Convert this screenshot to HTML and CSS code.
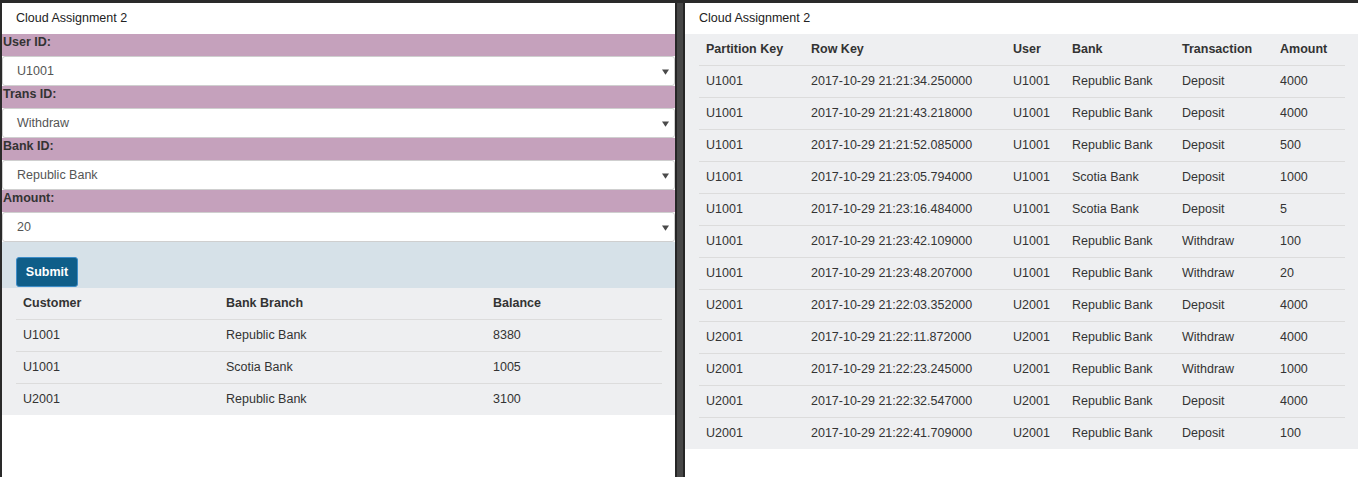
FILE: index.html
```html
<!DOCTYPE html>
<html>
<head>
<meta charset="utf-8">
<title>Cloud Assignment 2</title>
<link rel="stylesheet" href="styles.css">
</head>
<body>
<div class="screen">
  <div class="win">
    <div class="title">Cloud Assignment 2</div>
    <form class="form">
      <div class="field">
        <div class="label">User ID:</div>
        <div class="select"><span>U1001</span><svg class="caret" width="8" height="6" viewBox="0 0 8 6"><polygon points="0,0 8,0 4,6" fill="#4a4a4a"/></svg></div>
      </div>
      <div class="field">
        <div class="label">Trans ID:</div>
        <div class="select"><span>Withdraw</span><svg class="caret" width="8" height="6" viewBox="0 0 8 6"><polygon points="0,0 8,0 4,6" fill="#4a4a4a"/></svg></div>
      </div>
      <div class="field">
        <div class="label">Bank ID:</div>
        <div class="select"><span>Republic Bank</span><svg class="caret" width="8" height="6" viewBox="0 0 8 6"><polygon points="0,0 8,0 4,6" fill="#4a4a4a"/></svg></div>
      </div>
      <div class="field">
        <div class="label">Amount:</div>
        <div class="select"><span>20</span><svg class="caret" width="8" height="6" viewBox="0 0 8 6"><polygon points="0,0 8,0 4,6" fill="#4a4a4a"/></svg></div>
      </div>
      <div class="actions"><button type="button" class="btn">Submit</button></div>
    </form>
    <div class="panel">
      <table class="grid">
        <colgroup><col class="l1"><col class="l2"><col class="l3"></colgroup>
        <thead><tr><th>Customer</th><th>Bank Branch</th><th>Balance</th></tr></thead>
        <tbody>
          <tr><td>U1001</td><td>Republic Bank</td><td>8380</td></tr>
          <tr><td>U1001</td><td>Scotia Bank</td><td>1005</td></tr>
          <tr><td>U2001</td><td>Republic Bank</td><td>3100</td></tr>
        </tbody>
      </table>
    </div>
  </div>
  <div class="divider"></div>
  <div class="win">
    <div class="title">Cloud Assignment 2</div>
    <div class="panel panel-right">
      <table class="grid">
        <colgroup><col class="r1"><col class="r2"><col class="r3"><col class="r4"><col class="r5"><col class="r6"></colgroup>
        <thead><tr><th>Partition Key</th><th>Row Key</th><th>User</th><th>Bank</th><th>Transaction</th><th>Amount</th></tr></thead>
        <tbody>
          <tr><td>U1001</td><td>2017-10-29 21:21:34.250000</td><td>U1001</td><td>Republic Bank</td><td>Deposit</td><td>4000</td></tr>
          <tr><td>U1001</td><td>2017-10-29 21:21:43.218000</td><td>U1001</td><td>Republic Bank</td><td>Deposit</td><td>4000</td></tr>
          <tr><td>U1001</td><td>2017-10-29 21:21:52.085000</td><td>U1001</td><td>Republic Bank</td><td>Deposit</td><td>500</td></tr>
          <tr><td>U1001</td><td>2017-10-29 21:23:05.794000</td><td>U1001</td><td>Scotia Bank</td><td>Deposit</td><td>1000</td></tr>
          <tr><td>U1001</td><td>2017-10-29 21:23:16.484000</td><td>U1001</td><td>Scotia Bank</td><td>Deposit</td><td>5</td></tr>
          <tr><td>U1001</td><td>2017-10-29 21:23:42.109000</td><td>U1001</td><td>Republic Bank</td><td>Withdraw</td><td>100</td></tr>
          <tr><td>U1001</td><td>2017-10-29 21:23:48.207000</td><td>U1001</td><td>Republic Bank</td><td>Withdraw</td><td>20</td></tr>
          <tr><td>U2001</td><td>2017-10-29 21:22:03.352000</td><td>U2001</td><td>Republic Bank</td><td>Deposit</td><td>4000</td></tr>
          <tr><td>U2001</td><td>2017-10-29 21:22:11.872000</td><td>U2001</td><td>Republic Bank</td><td>Withdraw</td><td>4000</td></tr>
          <tr><td>U2001</td><td>2017-10-29 21:22:23.245000</td><td>U2001</td><td>Republic Bank</td><td>Withdraw</td><td>1000</td></tr>
          <tr><td>U2001</td><td>2017-10-29 21:22:32.547000</td><td>U2001</td><td>Republic Bank</td><td>Deposit</td><td>4000</td></tr>
          <tr><td>U2001</td><td>2017-10-29 21:22:41.709000</td><td>U2001</td><td>Republic Bank</td><td>Deposit</td><td>100</td></tr>
        </tbody>
      </table>
    </div>
  </div>
</div>
</body>
</html>
```
FILE: styles.css
```css
* { box-sizing: border-box; }
html, body { margin: 0; padding: 0; }
body {
  background: #2a2a2a;
  font-family: "Liberation Sans", Arial, sans-serif;
  font-size: 12.5px;
  color: #333;
  height: 477px;
  overflow: hidden;
}
.screen {
  display: flex;
  height: 477px;
  padding: 3px 0 0 2px;
}
.win {
  width: 673px;
  background: #fff;
  display: flex;
  flex-direction: column;
}
.divider {
  width: 10px;
  background: #474747;
  border-left: 2px solid #262626;
  border-right: 2px solid #262626;
}
.title {
  height: 31px;
  line-height: 30px;
  padding-left: 14px;
  color: #222;
}
.form { margin: 0; }
.field { display: flex; flex-direction: column; }
.label {
  height: 22px;
  line-height: 17px;
  background: #c5a1bc;
  font-weight: bold;
  color: #333;
  padding-left: 1px;
}
.select {
  height: 30px;
  background: #fff;
  border: 1px solid #cfcfcf;
  border-radius: 3px;
  display: flex;
  align-items: center;
  justify-content: space-between;
  padding: 0 5px 0 14px;
  color: #555;
}
.caret { display: block; margin-top: 1px; width: 7px; height: 6px; }
.actions {
  background: #d6e1e8;
  padding: 15px 14px 1px;
  height: 46px;
}
.btn {
  display: block;
  width: 62px;
  height: 30px;
  background: #0f5e89;
  border: 1px solid #3d8dc8;
  border-radius: 3px;
  color: #fff;
  font-family: "Liberation Sans", Arial, sans-serif;
  font-size: 12.5px;
  font-weight: bold;
  padding: 0;
}
.panel {
  background: #eeeff1;
  padding: 0 13px 0 14px;
}
.grid {
  width: 100%;
  border-collapse: collapse;
  table-layout: fixed;
}
.grid th, .grid td {
  text-align: left;
  padding: 7px 7px;
  line-height: 17px;
  white-space: nowrap;
}
.grid th { font-weight: bold; color: #333; }
.grid td { border-top: 1px solid #dcdcdc; color: #333; }
.l1 { width: 203px; }
.l2 { width: 267px; }
.l3 { width: 176px; }
.r1 { width: 105px; }
.r2 { width: 202px; }
.r3 { width: 59px; }
.r4 { width: 110px; }
.r5 { width: 98px; }
.r6 { width: 72px; }
```
